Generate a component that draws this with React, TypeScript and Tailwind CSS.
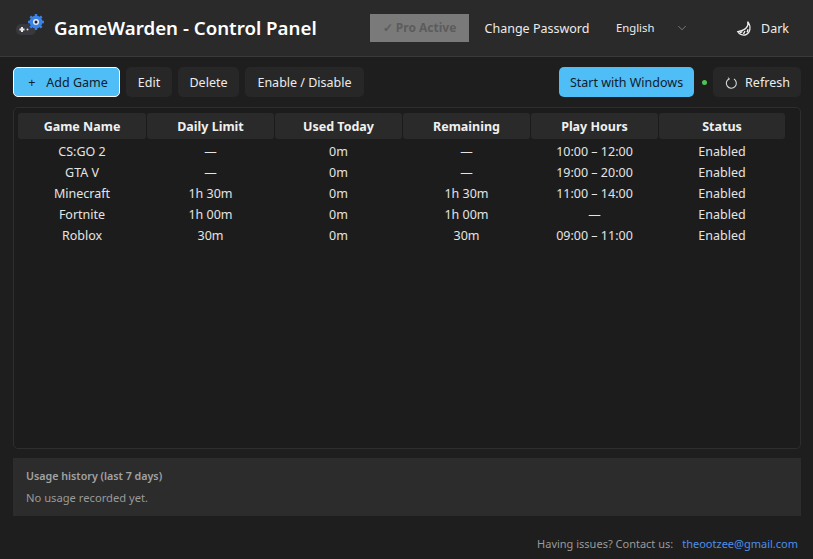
import React from "react";
import { ChevronDown } from "lucide-react";

const font = "font-['Noto_Sans','Open_Sans',sans-serif]";

const rows = [
  ["CS:GO 2", "—", "0m", "—", "10:00 – 12:00", "Enabled"],
  ["GTA V", "—", "0m", "—", "19:00 – 20:00", "Enabled"],
  ["Minecraft", "1h 30m", "0m", "1h 30m", "11:00 – 14:00", "Enabled"],
  ["Fortnite", "1h 00m", "0m", "1h 00m", "—", "Enabled"],
  ["Roblox", "30m", "0m", "30m", "09:00 – 11:00", "Enabled"],
];
const heads = ["Game Name", "Daily Limit", "Used Today", "Remaining", "Play Hours", "Status"];

function Logo() {
  return (
    <svg width="30" height="26" viewBox="0 0 30 26" className="shrink-0 -mt-[3px]">
      <rect x="0" y="10" width="20" height="11" rx="5" fill="#38383e" />
      <path d="M6 13v5M3.500 15.500h5" stroke="#e8e8e8" strokeWidth="2" />
      <circle cx="11.500" cy="15.500" r="1" fill="#d8d8d8" />
      <circle cx="20" cy="8" r="6.500" fill="#3b82e6" />
      <g stroke="#3b82e6" strokeWidth="2.400">
        <path d="M20 0v16M12 8h16M14.300 2.300l11.400 11.400M25.700 2.300L14.300 13.700" />
      </g>
      <circle cx="20" cy="8" r="3" fill="#e4ecf7" />
      <circle cx="20" cy="8" r="1.500" fill="#14202e" />
    </svg>
  );
}

function Moon() {
  return (
    <svg width="17" height="17" viewBox="0 0 16 16" fill="none" className="shrink-0">
      <path d="M11 1.500c1.200 4.200-1.500 8.200-9.300 9.400 1.600 2.900 5 4 7.800 2.900 3.600-1.500 5.400-7.400 1.500-12.300z" fill="#242424" stroke="#eeeeee" strokeWidth="1.200" />
      <path d="M3.500 12l2.500-1M7 13l1.500-2.500M10.500 11.500l.8-2.800" stroke="#eeeeee" strokeWidth="1.300" />
    </svg>
  );
}

function RefreshIcon() {
  return (
    <svg width="13" height="13" viewBox="0 0 13 13" fill="none" className="shrink-0">
      <path d="M4.200 1.700A5 5 0 1 0 9 2" stroke="#d8d8d8" strokeWidth="1.100" />
      <path d="M2.900 0.600l1.500 1.100-1.100 1.500" stroke="#d8d8d8" strokeWidth="0.900" />
    </svg>
  );
}

function Btn({ children, className = "" }: { children: React.ReactNode; className?: string }) {
  return (
    <button className={`h-[30px] rounded-[5px] pt-[2px] text-[12.500px] flex items-center justify-center whitespace-nowrap ${className}`}>
      {children}
    </button>
  );
}

const cols = "grid grid-cols-[129px_128px_128px_128px_128px_127px]";

export default function App() {
  return (
    <div className={`${font} w-[813px] h-[559px] bg-[#1e1e1e] flex flex-col overflow-hidden`}>
      <header className="h-[57px] shrink-0 bg-[#2a2a2a] border-b border-[#3a3a3a] flex items-center pl-[16px] pr-[5px]">
        <Logo />
        <h1 className="ml-[8px] pt-[1px] text-[18.700px] font-semibold text-white whitespace-nowrap leading-none">GameWarden - Control Panel</h1>
        <div className="ml-auto flex items-center">
          <div className="w-[99px] h-[28px] bg-[#7a7a7a] text-[#5c5c5c] font-bold text-[12px] flex items-center justify-center whitespace-nowrap">✓ Pro Active</div>
          <div className="ml-[4px] w-[127px] h-[30px] rounded-[3px] text-[12.500px] pt-[3px] pl-[1px] text-[#ececec] flex items-center justify-center whitespace-nowrap">Change Password</div>
          <div className="ml-[5px] w-[98px] h-[30px] pl-[11px] pr-[14px] text-[11.300px] text-[#ececec] flex items-center justify-between">
            <span>English</span>
            <ChevronDown size={14} strokeWidth={1.200} className="text-[#9a9a9a]" />
          </div>
          <div className="ml-[12px] w-[93px] h-[30px] text-[12.500px] text-[#ececec] flex items-center gap-[8px] pl-[21px]">
            <Moon />
            <span className="pt-[3px]">Dark</span>
          </div>
        </div>
      </header>

      <div className="flex items-center pl-[13px] pr-[12px] pt-[10px] h-[40px] shrink-0">
        <Btn className="w-[107px] bg-[#4fbdf6] border border-white text-[#10202c] pl-[3px] gap-[11px]">
          <span>+</span>
          <span>Add Game</span>
        </Btn>
        <Btn className="ml-[6px] w-[46px] bg-[#272727] text-[#ececec]">Edit</Btn>
        <Btn className="ml-[6px] w-[61px] bg-[#272727] text-[#ececec]">Delete</Btn>
        <Btn className="ml-[6px] w-[119px] bg-[#272727] text-[#ececec]">Enable / Disable</Btn>
        <Btn className="ml-auto w-[135px] bg-[#4fbdf6] text-[#10202c]">Start with Windows</Btn>
        <span className="ml-[8px] w-[5px] h-[5px] rounded-full bg-[#4cc552]" />
        <Btn className="ml-[6px] w-[88px] gap-[7px] pl-[1px] bg-[#272727] text-[#ececec]">
          <RefreshIcon />
          <span>Refresh</span>
        </Btn>
      </div>

      <main className="ml-[13px] mr-[12px] mt-[10px] h-[342px] shrink-0 rounded-[5px] border border-[#2e2e2e] bg-[#1c1c1c] px-[4px] pt-[5px]">
        <div className={cols}>
          {heads.map((h) => (
            <div key={h} className="h-[26px] mr-[1px] pt-[3px] rounded-[3px] bg-[#2a2a2a] text-[12.500px] font-bold text-[#f0f0f0] flex items-center justify-center whitespace-nowrap">
              {h}
            </div>
          ))}
        </div>
        <div className="pt-[2px]">
          {rows.map((r) => (
            <div key={r[0]} className={`${cols} h-[21px]`}>
              {r.map((c, i) => (
                <div key={i} className="pr-[1px] pt-[2px] text-[12.500px] text-[#e4e4e4] flex items-center justify-center whitespace-nowrap">
                  {c}
                </div>
              ))}
            </div>
          ))}
        </div>
      </main>

      <section className="ml-[13px] mr-[12px] mt-[9px] h-[58px] shrink-0 bg-[#2c2c2c] px-[13px] pt-[10px]">
        <div className="text-[10.700px] font-semibold text-[#a3a3a3] leading-[16px] whitespace-nowrap">Usage history (last 7 days)</div>
        <div className="mt-[6px] text-[11.200px] text-[#9a9a9a] leading-[16px] whitespace-nowrap">No usage recorded yet.</div>
      </section>

      <footer className="flex items-center justify-end mt-[20px] pr-[15px] text-[11px] leading-[16px] whitespace-nowrap">
        <span className="text-[#9a9a9a]">Having issues? Contact us:</span>
        <span className="ml-[9px] text-[#4d8fe8]">theootzee@gmail.com</span>
      </footer>
    </div>
  );
}
